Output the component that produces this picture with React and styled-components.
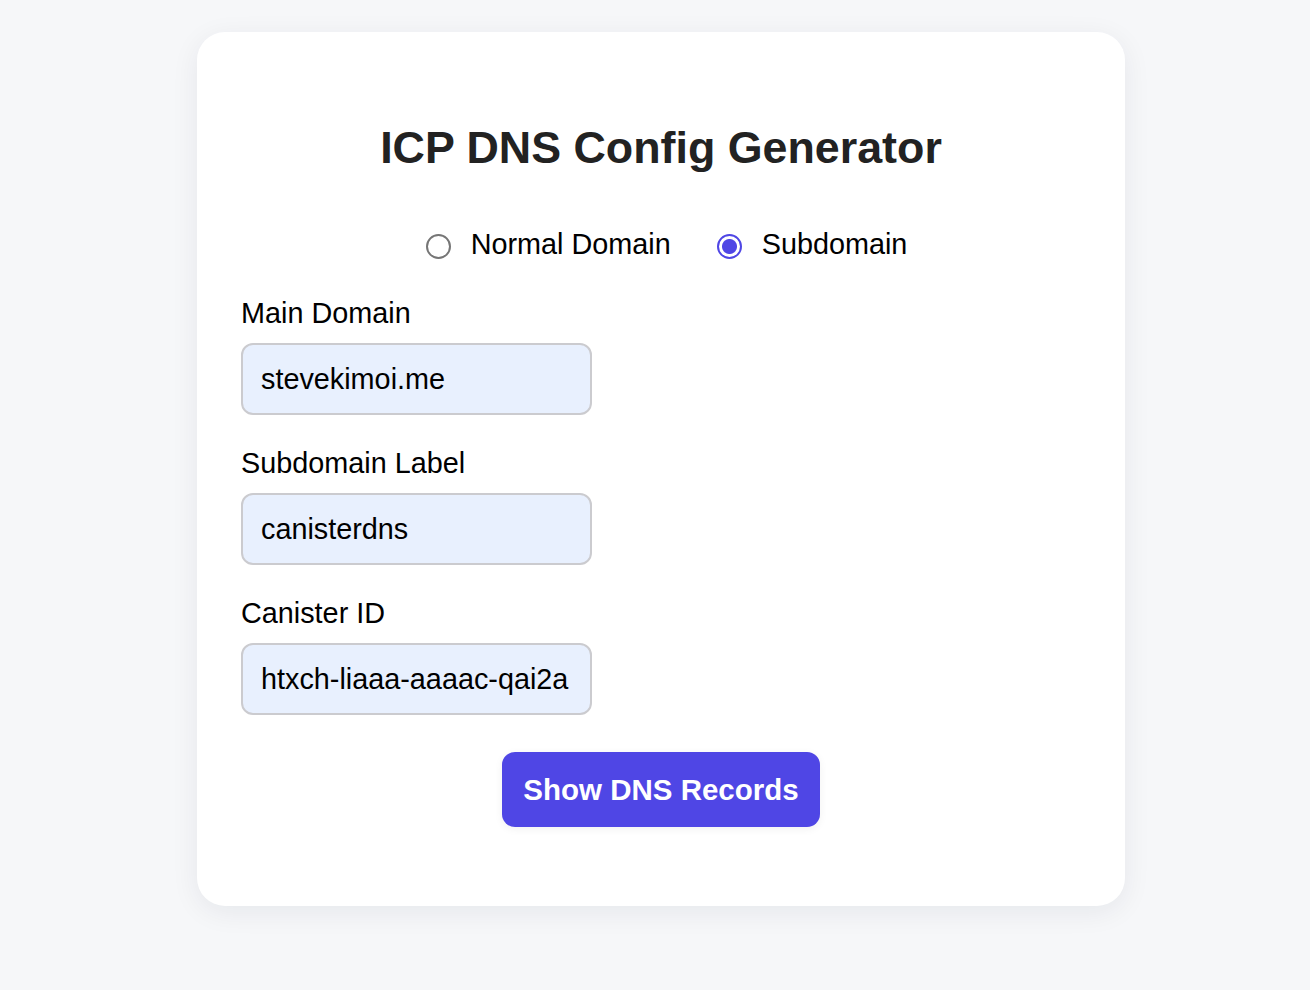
import React, { useState } from 'react';
import styled, { createGlobalStyle } from 'styled-components';

const GlobalStyle = createGlobalStyle`
  html, body {
    margin: 0;
    padding: 0;
    background: #f6f7f9;
    font-family: "Liberation Sans", Arial, Helvetica, sans-serif;
  }
`;

function App() {
  const [mode, setMode] = useState('subdomain');
  const [mainDomain, setMainDomain] = useState('stevekimoi.me');
  const [label, setLabel] = useState('canisterdns');
  const [canisterId, setCanisterId] = useState('htxch-liaaa-aaaac-qai2a');

  return (
    <Page>
      <GlobalStyle />
      <Card>
        <Title>ICP DNS Config Generator</Title>
        <RadioRow>
          <RadioLabel>
            <Radio
              type="radio"
              name="mode"
              checked={mode === 'normal'}
              onChange={() => setMode('normal')}
            />
            Normal Domain
          </RadioLabel>
          <RadioLabel>
            <Radio
              type="radio"
              name="mode"
              checked={mode === 'subdomain'}
              onChange={() => setMode('subdomain')}
            />
            Subdomain
          </RadioLabel>
        </RadioRow>
        <Field>
          <FieldLabel>Main Domain</FieldLabel>
          <Input value={mainDomain} onChange={e => setMainDomain(e.target.value)} />
        </Field>
        {mode === 'subdomain' && (
          <Field>
            <FieldLabel>Subdomain Label</FieldLabel>
            <Input value={label} onChange={e => setLabel(e.target.value)} />
          </Field>
        )}
        <Field>
          <FieldLabel>Canister ID</FieldLabel>
          <Input value={canisterId} onChange={e => setCanisterId(e.target.value)} />
        </Field>
        <ButtonRow>
          <Button type="button">Show DNS Records</Button>
        </ButtonRow>
      </Card>
    </Page>
  );
}
export default App;

const Page = styled.div`
  min-height: 990px;
  box-sizing: border-box;
  display: flex;
  justify-content: center;
  align-items: flex-start;
  padding: 32px 0 0 12px;
`;
const Card = styled.div`
  width: 928px;
  box-sizing: border-box;
  background: #ffffff;
  border-radius: 28px;
  padding: 44px 44px 79px;
  box-shadow: 0 6px 28px rgba(20, 30, 60, 0.07);
  display: flex;
  flex-direction: column;
`;
const Title = styled.h1`
  margin: 46px 0 0;
  text-align: center;
  font-size: 44.8px;
  font-weight: 700;
  color: #222222;
  line-height: 51px;
`;
const RadioRow = styled.div`
  margin-top: 55px;
  padding-left: 11px;
  display: flex;
  justify-content: center;
  gap: 46px;
`;
const RadioLabel = styled.label`
  display: inline-flex;
  align-items: center;
  gap: 20px;
  font-size: 28.8px;
  line-height: 33px;
  color: #000;
  cursor: pointer;
`;
const Radio = styled.input`
  appearance: none;
  margin: 3px 0 0 0;
  width: 25px;
  height: 25px;
  border-radius: 50%;
  border: 2px solid #767676;
  box-sizing: border-box;
  background: #fff;
  cursor: pointer;
  &:checked {
    border: 2.5px solid #4f46e5;
    background: radial-gradient(circle, #4f46e5 0 7px, #fff 8px);
  }
`;
const Field = styled.div`
  margin-top: 36px;
  display: flex;
  flex-direction: column;
  align-items: flex-start;
  gap: 13px;
  & + & {
    margin-top: 32px;
  }
`;
const FieldLabel = styled.label`
  font-size: 28.8px;
  line-height: 33px;
  color: #000;
`;
const Input = styled.input`
  width: 351px;
  height: 72px;
  box-sizing: border-box;
  padding: 0 18px;
  border: 2px solid #cbcbcf;
  border-radius: 12px;
  background: #e8f0fe;
  font-family: inherit;
  font-size: 28.8px;
  color: #000;
  outline: none;
`;
const ButtonRow = styled.div`
  margin-top: 37px;
  display: flex;
  justify-content: center;
`;
const Button = styled.button`
  height: 75px;
  padding: 0 21px;
  border: none;
  border-radius: 13px;
  background: #4f46e5;
  color: #fff;
  font-family: inherit;
  font-weight: 700;
  font-size: 29.5px;
  cursor: pointer;
  box-shadow: 0 2px 8px rgba(0, 0, 0, 0.06);
`;
